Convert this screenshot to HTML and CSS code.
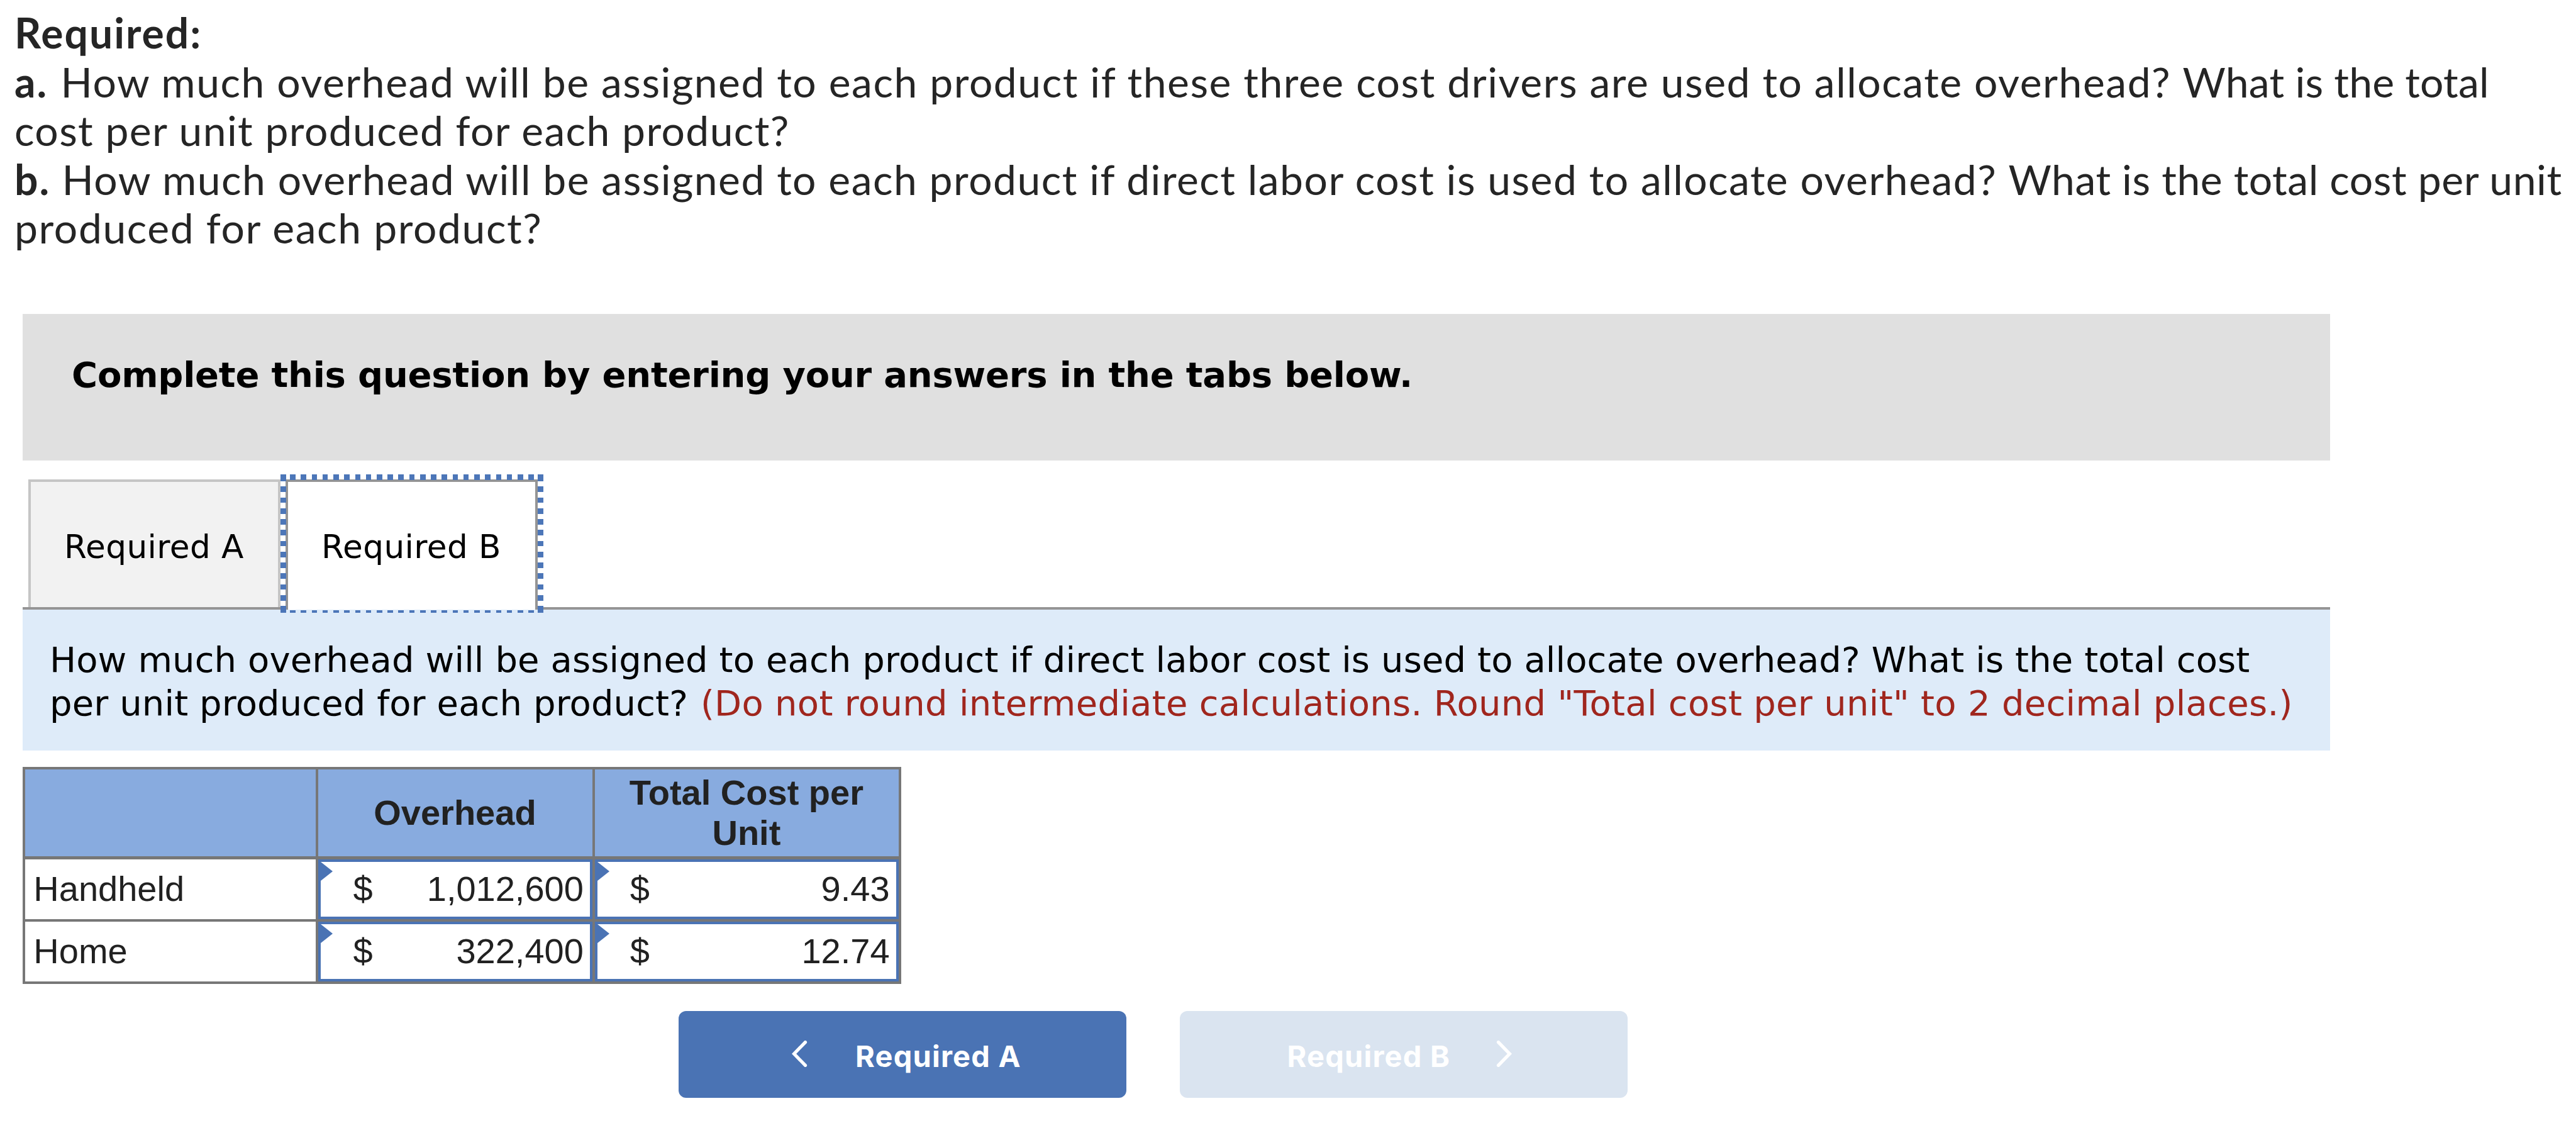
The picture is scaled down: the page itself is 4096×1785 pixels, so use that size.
FILE: index.html
```html
<!DOCTYPE html>
<html lang="en">
<head>
<meta charset="utf-8">
<title>Overhead allocation</title>
<link rel="stylesheet" href="styles.css">
</head>
<body>
<section class="intro">
  <p class="l1"><b>Required:</b></p>
  <p class="l2"><b>a.</b> How much overhead will be assigned to each product if these three cost drivers are used to allocate overhead? <span class="tail">What is the total</span></p>
  <p class="l3">cost per unit produced for each product?</p>
  <p class="l4"><b>b.</b> How much overhead will be assigned to each product if direct labor cost is used to allocate overhead? <span class="tail">What is the total cost per unit</span></p>
  <p class="l5">produced for each product?</p>
</section>
<main class="question">
  <header class="banner">Complete this question by entering your answers in the tabs below.</header>
  <nav class="tabs">
    <a class="tab">Required A</a>
    <a class="tab active">Required B
      <svg class="focus" width="418" height="220" viewBox="0 0 582 306" preserveAspectRatio="none" fill="none" stroke="#4c76b8" stroke-width="12" shape-rendering="crispEdges">
        <path d="M21 6H561" stroke-dasharray="12 12"/>
        <path d="M21 303H561" stroke-width="6" stroke-dasharray="12 12"/>
        <path d="M6 27V306M576 27V306" stroke-dasharray="12 12"/>
        <path d="M6 0V15M6 291V306M576 0V15M576 291V306"/>
      </svg>
    </a>
  </nav>
  <div class="prompt">
    <p>How much overhead will be assigned to each product if direct labor cost is used to allocate overhead? What is the total cost</p>
    <p>per unit produced for each product? <span class="note">(Do not round intermediate calculations. Round "Total cost per unit" to 2 decimal places.)</span></p>
  </div>
  <div class="grid">
    <div class="head"></div>
    <div class="head"><span>Overhead</span></div>
    <div class="head"><span>Total Cost per</span><span>Unit</span></div>
    <div class="label">Handheld</div>
    <div class="cell"><span>$</span><span>1,012,600</span></div>
    <div class="cell"><span>$</span><span>9.43</span></div>
    <div class="label">Home</div>
    <div class="cell"><span>$</span><span>322,400</span></div>
    <div class="cell"><span>$</span><span>12.74</span></div>
  </div>
  <footer class="pager">
    <button class="btn prev"><svg class="chev" viewBox="0 0 25 42"><path d="M21.5 2.6L3.6 21L21.5 39.4"/></svg><span>Required A</span></button>
    <button class="btn next"><span>Required B</span><svg class="chev" viewBox="0 0 25 42"><path d="M3.5 2.6L21.4 21L3.5 39.4"/></svg></button>
  </footer>
</main>
</body>
</html>
```
FILE: styles.css
```css
* { box-sizing: border-box; }
body { margin: 0; width: 4096px; height: 1785px; overflow: hidden; background: #fff; color: #212121; }
p { margin: 0; white-space: nowrap; }

.intro { padding: 13px 0 0 23px; height: 499px; font: 66px/77.6px Lato, sans-serif; letter-spacing: 1.4px; color: #252525; }
.intro b { letter-spacing: 2px; }
.l2 b { margin-right: 2px; }
.l2 { letter-spacing: 1.52px; }
.l2 .tail { letter-spacing: 0.2px; }
.l4 { letter-spacing: 1.46px; }
.l4 .tail { letter-spacing: 0.57px; }
.l5 { letter-spacing: 1.6px; }

.question { margin-left: 36px; width: 3669px; }
.banner { height: 233px; padding: 59.3px 0 0 78px; background: #e0e0e0; color: #000; font: bold 56px/76px "DejaVu Sans", sans-serif; letter-spacing: -0.22px; white-space: nowrap; }

.tabs { display: flex; height: 237px; padding: 30px 0 0 9px; gap: 8px; border-bottom: 4px solid #959595; font: 51.7px/76px "DejaVu Sans", sans-serif; letter-spacing: 0.4px; color: #000; }
.tab { position: relative; width: 401px; height: 203px; padding: 65px 0 0 53px; border: 4px solid #c5c5c5; border-bottom: 0; background: #f2f2f2; white-space: nowrap; }
.tab.active { height: 207px; border-color: #959595; background: #fff; }
.focus { position: absolute; left: -12px; top: -12px; }

.prompt { height: 224px; padding: 45px 0 0 43px; background: #deebf9; color: #000; font: 56px/69.2px "DejaVu Sans", sans-serif; letter-spacing: 0.11px; }
.note { margin-left: 2px; color: #a0261e; letter-spacing: 0.29px; }

.grid { display: grid; grid-template-columns: 461.4px 435.9px 482.4px; grid-template-rows: 138px 95.1px 95.1px; gap: 4.3px; width: 1397px; height: 345px; margin-top: 26px; padding: 4.3px; background: #777; font: 56px/64.7px "Liberation Sans", Arial, sans-serif; }
.head { display: flex; flex-direction: column; align-items: center; justify-content: center; padding-right: 1px; background: #88abdf; font-weight: bold; }
.label { padding: 15.2px 0 0 13px; background: #fff; }
.cell { position: relative; display: flex; justify-content: space-between; padding: 11.2px 10px 0 51.5px; border: 4px solid #4a73b4; background: #fff; }
.cell::before { content: ""; position: absolute; left: 0; top: 0; border: solid transparent; border-width: 15px 0 15px 19px; border-left-color: #4a73b4; }

.pager { display: flex; gap: 85px; margin: 43px 0 0 1043px; }
.btn { display: flex; align-items: center; width: 712px; height: 138px; border: 0; border-radius: 12px; background: #4a73b4; color: #fff; font: 700 47px/60px Inter, sans-serif; letter-spacing: 1.2px; white-space: nowrap; }
.btn span { padding-top: 5px; }
.prev { padding: 0 0 0 180px; gap: 76px; }
.next { padding: 0 184px 0 170.5px; justify-content: space-between; background: #dae4f0; }
.chev { width: 25px; height: 42px; margin-bottom: 2px; fill: none; stroke: #fff; stroke-width: 5.2; stroke-linecap: round; }
```
